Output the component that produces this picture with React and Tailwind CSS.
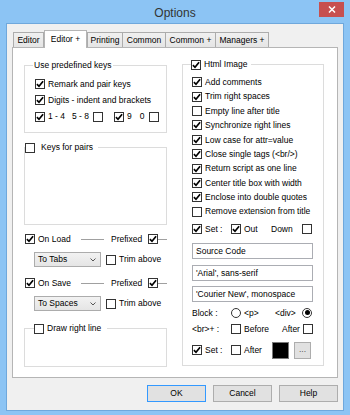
import React from "react";

const Check = ({ on }) => (
  <span className="w-[10px] h-[10px] shrink-0 border border-[#333333] bg-white flex items-center justify-center">
    {on && (
      <svg width="8" height="8" viewBox="0 0 8 8">
        <path d="M0.9 4.1 L3 6.3 L7.1 1.2" fill="none" stroke="#000" strokeWidth="1.7" />
      </svg>
    )}
  </span>
);

const Radio = ({ on }) => (
  <span className="w-[10px] h-[10px] shrink-0 rounded-full border border-[#333333] bg-white flex items-center justify-center">
    {on && <span className="w-[5px] h-[5px] rounded-full bg-black" />}
  </span>
);

const Select = ({ label }) => (
  <div className="ml-[10px] w-[67px] h-[15px] border border-[#acacac] bg-gradient-to-b from-[#f2f2f2] to-[#e5e5e5] flex items-center justify-between pl-[3px] pr-[4px]">
    <span>{label}</span>
    <svg width="6" height="4" viewBox="0 0 6 4">
      <path d="M0.5 0.5 L3 3 L5.5 0.5" fill="none" stroke="#555" strokeWidth="1" />
    </svg>
  </div>
);

const Input = ({ value }) => (
  <div className="ml-[9px] w-[121px] h-[16px] border border-[#abadb3] bg-white flex items-center pl-[3px]">
    {value}
  </div>
);

const Tab = ({ label, w, active, bl }) =>
  active ? (
    <div
      className={`${w} h-[18px] -mb-[1px] relative z-10 bg-white border border-b-0 border-[#b5b5b5] flex items-center justify-center pb-[1px]`}
    >
      {label}
    </div>
  ) : (
    <div
      className={`${w} h-[15px] bg-gradient-to-b from-[#f0f0f0] to-[#e5e5e5] border-t border-r ${bl ? "border-l" : ""} border-[#acacac] flex items-center justify-center pt-[1px]`}
    >
      {label}
    </div>
  );

const Row = ({ on, label }) => (
  <div className="h-[14.4px] flex items-center ml-[9px] gap-[3px]">
    <Check on={on} />
    <span>{label}</span>
  </div>
);

const Btn = ({ label, def }) => (
  <div
    className={`w-[59px] h-[17px] bg-[#e1e1e1] border ${def ? "border-[#3399ff]" : "border-[#adadad]"} flex items-center justify-center`}
  >
    {label}
  </div>
);

export default function App() {
  return (
    <div className="w-[350px] h-[415px] bg-[#8cc4f4] flex flex-col font-['Liberation_Sans',Arial,sans-serif] text-[8.5px] leading-none text-black">
      {/* title bar */}
      <div className="h-[23px] grid grid-cols-[1fr_auto_1fr] items-start">
        <div />
        <div className="pt-[6px] text-[12px] leading-[14px] text-[#333333]">Options</div>
        <div className="justify-self-end mr-[6px] mt-[2px] w-[25px] h-[15px] bg-[#c75050] flex items-center justify-center">
          <svg width="8" height="7" viewBox="0 0 8 7">
            <path d="M1 0.5 L7 6.5 M7 0.5 L1 6.5" stroke="#fff" strokeWidth="1.5" />
          </svg>
        </div>
      </div>

      {/* client */}
      <div className="mx-[6px] h-[388px] border border-[#6fa8dc] bg-[#f0f0f0] flex flex-col px-[5px] pt-[6px]">
        {/* tabs */}
        <div className="h-[17px] flex items-end pl-[1px]">
          <Tab label="Editor" w="w-[31px]" bl />
          <Tab label="Editor +" w="w-[43px]" active />
          <Tab label="Printing" w="w-[36px]" bl />
          <Tab label="Common" w="w-[43px]" />
          <Tab label="Common +" w="w-[50px]" />
          <Tab label="Managers +" w="w-[53px]" />
        </div>

        {/* panel */}
        <div className="h-[331px] border border-[#b5b5b5] bg-white flex">
          {/* left column */}
          <div className="ml-[11px] w-[143px] flex flex-col">
            {/* group 1 */}
            <div className="mt-[17px] h-[68px] border border-[#dcdcdc] flex flex-col">
              <div className="-mt-[6px] ml-[8px] flex">
                <span className="bg-white px-[1px] h-[11px] flex items-center">Use predefined keys</span>
              </div>
              <div className="mt-[5px] flex flex-col ml-[10px]">
                <div className="h-[16px] flex items-center gap-[3px]">
                  <Check on />
                  <span>Remark and pair keys</span>
                </div>
                <div className="h-[16px] flex items-center gap-[3px]">
                  <Check on />
                  <span>Digits - indent and brackets</span>
                </div>
                <div className="h-[17px] flex items-center">
                  <Check on />
                  <span className="ml-[3px]">1 - 4</span>
                  <span className="ml-[7px]">5 - 8</span>
                  <span className="ml-[4px]">
                    <Check />
                  </span>
                  <span className="ml-[11px]">
                    <Check on />
                  </span>
                  <span className="ml-[3px]">9</span>
                  <span className="ml-[8px]">0</span>
                  <span className="ml-[4px]">
                    <Check />
                  </span>
                </div>
              </div>
            </div>

            {/* group 2 */}
            <div className="mt-[14px] h-[78px] border border-[#dcdcdc] flex flex-col">
              <div className="-mt-[6px] flex">
                <span className="bg-white pr-[5px] h-[11px] flex items-center gap-[6px]">
                  <Check />
                  <span>Keys for pairs</span>
                </span>
              </div>
            </div>

            {/* On Load */}
            <div className="mt-[6px] h-[16px] flex items-center ml-[1px]">
              <Check on />
              <span className="ml-[3px] w-[43px]">On Load</span>
              <span className="w-[23px] h-px bg-[#a0a0a0]" />
              <span className="ml-[7px] w-[33px]">Prefixed</span>
              <span className="ml-[4px]">
                <Check on />
              </span>
              <span className="w-[9px] h-px bg-[#a0a0a0]" />
            </div>
            <div className="mt-[5px] h-[15px] flex items-center">
              <Select label="To Tabs" />
              <span className="ml-[5px]">
                <Check />
              </span>
              <span className="ml-[3px]">Trim above</span>
            </div>

            {/* On Save */}
            <div className="mt-[8px] h-[16px] flex items-center ml-[1px]">
              <Check on />
              <span className="ml-[3px] w-[43px]">On Save</span>
              <span className="w-[23px] h-px bg-[#a0a0a0]" />
              <span className="ml-[7px] w-[33px]">Prefixed</span>
              <span className="ml-[4px]">
                <Check on />
              </span>
              <span className="w-[9px] h-px bg-[#a0a0a0]" />
            </div>
            <div className="mt-[5px] h-[15px] flex items-center">
              <Select label="To Spaces" />
              <span className="ml-[5px]">
                <Check />
              </span>
              <span className="ml-[3px]">Trim above</span>
            </div>

            {/* group 3 */}
            <div className="mt-[17px] h-[39px] border border-[#dcdcdc] flex flex-col">
              <div className="-mt-[6px] ml-[9px] flex">
                <span className="bg-white pr-[6px] h-[11px] flex items-center gap-[3px]">
                  <Check />
                  <span>Draw right line</span>
                </span>
              </div>
            </div>
          </div>

          {/* right column */}
          <div className="ml-[15px] w-[142px] flex flex-col">
            <div className="mt-[16px] h-[302px] border border-[#dcdcdc] flex flex-col">
              <div className="-mt-[6px] ml-[8px] flex">
                <span className="bg-white pr-[4px] h-[11px] flex items-center gap-[3px]">
                  <Check on />
                  <span>Html Image</span>
                </span>
              </div>
              <div className="mt-[5px] flex flex-col">
                <Row on label="Add comments" />
                <Row on label="Trim right spaces" />
                <Row label="Empty line after title" />
                <Row on label="Synchronize right lines" />
                <Row on label="Low case for attr=value" />
                <Row on label="Close single tags (<br/>)" />
                <Row on label="Return script as one line" />
                <Row on label="Center title box with width" />
                <Row on label="Enclose into double quotes" />
                <Row label="Remove extension from title" />
              </div>
              <div className="mt-[2px] h-[16px] flex items-center ml-[9px]">
                <Check on />
                <span className="ml-[3px] w-[26px]">Set :</span>
                <Check on />
                <span className="ml-[3px] w-[27px]">Out</span>
                <span className="w-[31px]">Down</span>
                <Check />
              </div>
              <div className="mt-[6px]">
                <Input value="Source Code" />
              </div>
              <div className="mt-[6px]">
                <Input value="'Arial', sans-serif" />
              </div>
              <div className="mt-[5px]">
                <Input value="'Courier New', monospace" />
              </div>
              <div className="mt-[3px] h-[16px] flex items-center ml-[9px]">
                <span className="w-[39px]">Block :</span>
                <Radio />
                <span className="ml-[3px] w-[31px]">&lt;p&gt;</span>
                <span className="w-[27px]">&lt;div&gt;</span>
                <Radio on />
              </div>
              <div className="h-[16px] flex items-center ml-[9px]">
                <span className="w-[39px]">&lt;br&gt;+ :</span>
                <Check />
                <span className="ml-[3px] w-[38px]">Before</span>
                <span className="w-[21px]">After</span>
                <Check />
              </div>
              <div className="mt-[5px] h-[17px] flex items-center ml-[9px]">
                <Check on />
                <span className="ml-[3px] w-[26px]">Set :</span>
                <Check />
                <span className="ml-[3px] w-[28px]">After</span>
                <span className="w-[17px] h-[17px] bg-black border border-[#7a7a7a]" />
                <span className="ml-[5px] w-[17px] h-[17px] bg-[#e1e1e1] border border-[#adadad] flex items-center justify-center text-[#555] pb-[2px]">
                  ...
                </span>
              </div>
            </div>
          </div>
        </div>

        {/* buttons */}
        <div className="mt-[7px] flex justify-end gap-[7px]">
          <Btn label="OK" def />
          <Btn label="Cancel" />
          <Btn label="Help" />
        </div>
      </div>
    </div>
  );
}
